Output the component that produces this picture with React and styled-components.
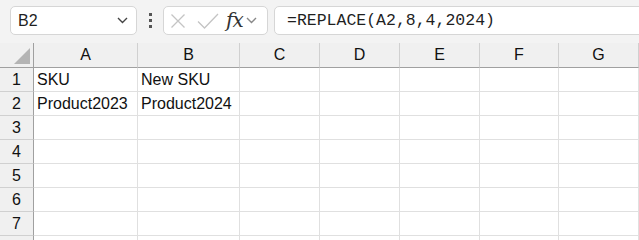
import styled, { createGlobalStyle } from 'styled-components'

const Global = createGlobalStyle`
  body {
    margin: 0;
    background: #f3f3f3;
    font-family: 'Liberation Sans', Arial, sans-serif;
    overflow: hidden;
  }
`

const Toolbar = styled.div`
  height: 43px;
  display: flex;
  align-items: flex-start;
  padding: 6px 0 0 10px;
  box-sizing: border-box;
  background: #f3f3f3;
`
const Box = styled.div`
  height: 29px;
  box-sizing: border-box;
  background: #fff;
  border: 1px solid #d6d6d6;
  border-radius: 5px;
  display: flex;
  align-items: center;
`
const NameBox = styled(Box)`
  width: 127px;
  padding: 0 8px 0 7px;
  justify-content: space-between;
  font-size: 16px;
  color: #1f1f1f;
`
const Dots = styled.div`
  width: 26px;
  height: 29px;
  display: flex;
  flex-direction: column;
  align-items: center;
  justify-content: center;
  gap: 3px;
  span {
    width: 3px;
    height: 3px;
    background: #555;
  }
`
const FuncBox = styled(Box)`
  width: 105px;
  padding: 0 0 0 6px;
`
const Fx = styled.span`
  font-family: 'DejaVu Serif', 'Liberation Serif', serif;
  font-style: italic;
  font-size: 20px;
  color: #333;
  margin: 0 3px 0 7px;
  letter-spacing: -1px;
  position: relative;
  top: -1px;
`
const FormulaBox = styled(Box)`
  flex: 1;
  margin-left: 6px;
  margin-right: -10px;
  padding-left: 12px;
  font-family: 'Liberation Mono', 'Courier New', monospace;
  font-size: 16.5px;
  color: #1f1f1f;
`

const Grid = styled.div`
  display: grid;
  grid-template-columns: 34px 104px 102px 80px 80px 80px 79px 80px;
  background: #fff;
`
const Cell = styled.div`
  height: ${p => (p.$head ? 25 : 24)}px;
  box-sizing: border-box;
  border-right: 1px solid ${p => (p.$rowHead ? '#a0a0a0' : p.$head ? '#d0d0d0' : '#e0e0e0')};
  border-bottom: 1px solid ${p => (p.$head ? '#a0a0a0' : p.$rowHead ? '#d0d0d0' : '#e0e0e0')};
  background: ${p => (p.$head || p.$rowHead ? '#f0f0f0' : '#fff')};
  display: flex;
  align-items: center;
  justify-content: ${p => (p.$head || p.$rowHead ? 'center' : 'flex-start')};
  padding-left: ${p => (p.$head || p.$rowHead ? 0 : 3)}px;
  font-size: 16px;
  color: #111;
  white-space: nowrap;
`
const Corner = styled(Cell)`
  justify-content: flex-end;
  align-items: flex-end;
  padding: 0 3px 3px 0;
  &::after {
    content: '';
    width: 16px;
    height: 16px;
    background: #b4b4b4;
    clip-path: polygon(100% 0, 100% 100%, 0 100%);
  }
`

const cols = ['A', 'B', 'C', 'D', 'E', 'F', 'G']
const data = {
  1: ['SKU', 'New SKU'],
  2: ['Product2023', 'Product2024'],
}

const Chevron = ({ color = '#444', w = 11 }) => (
  <svg width={w} height="7" viewBox="0 0 11 7">
    <path d="M1 1l4.5 4.5L10 1" fill="none" stroke={color} strokeWidth="1.4" />
  </svg>
)

const Row = ({ r, label = true }) => (
  <>
    <Cell $rowHead>{label ? r : ''}</Cell>
    {cols.map((c, i) => (
      <Cell key={c}>{(data[r] || [])[i] || ''}</Cell>
    ))}
  </>
)

export default function App() {
  return (
    <>
      <Global />
      <Toolbar>
        <NameBox>
          <span>B2</span>
          <Chevron />
        </NameBox>
        <Dots>
          <span />
          <span />
          <span />
        </Dots>
        <FuncBox>
          <svg width="16" height="16" viewBox="0 0 16 16">
            <path d="M1.5 1.5l13 13M14.5 1.5l-13 13" stroke="#c4c4c4" strokeWidth="1.3" fill="none" />
          </svg>
          <svg width="22" height="16" viewBox="0 0 22 16" style={{ marginLeft: 11 }}>
            <path d="M1 8.5l6.5 6.5L21 1" stroke="#c4c4c4" strokeWidth="1.3" fill="none" />
          </svg>
          <Fx>fx</Fx>
          <Chevron color="#888" w={11} />
        </FuncBox>
        <FormulaBox>=REPLACE(A2,8,4,2024)</FormulaBox>
      </Toolbar>
      <Grid>
        <Corner $head $rowHead />
        {cols.map(c => (
          <Cell key={c} $head>
            {c}
          </Cell>
        ))}
        {[1, 2, 3, 4, 5, 6, 7].map(r => (
          <Row key={r} r={r} />
        ))}
        <Row r={8} label={false} />
      </Grid>
    </>
  )
}
